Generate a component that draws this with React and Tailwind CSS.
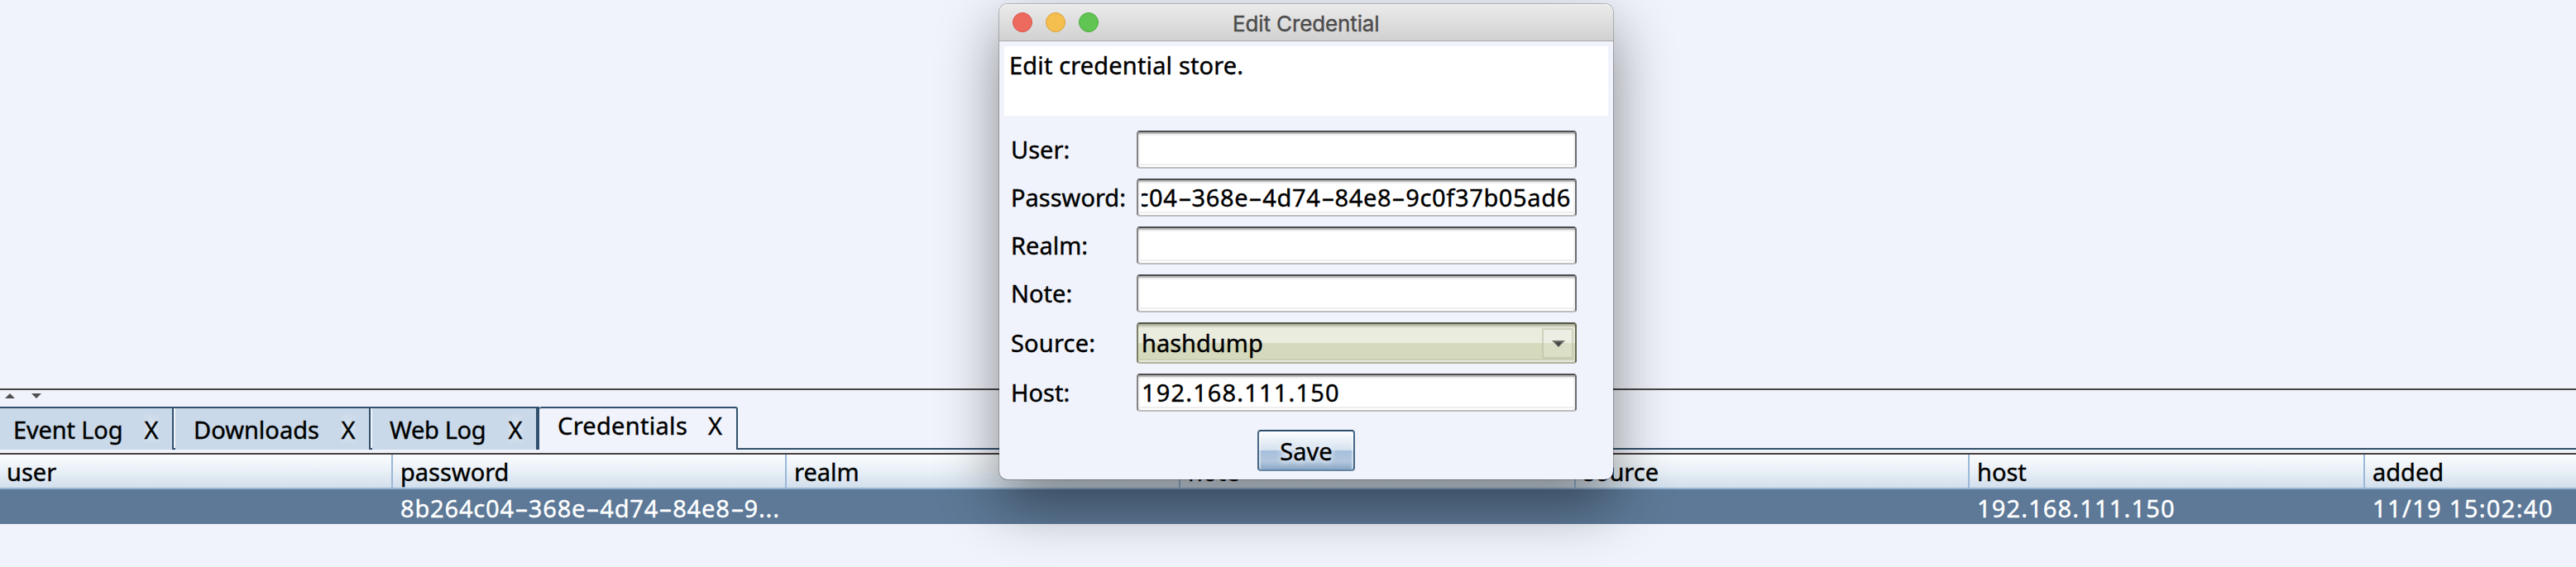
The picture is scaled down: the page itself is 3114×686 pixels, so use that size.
import React from "react";

/* Wide hyphen: the dash takes a full digit cell. */
function Dashed({ text }) {
  const parts = text.split("-");
  return parts.map((part, i) => (
    <React.Fragment key={i}>
      {i > 0 && (
        <span className="inline-block w-[17px] text-center tracking-normal scale-x-[1.75]">-</span>
      )}
      {part}
    </React.Fragment>
  ));
}

function Tab({ label, box, className }) {
  return (
    <div className={`flex h-[50px] justify-between bg-[#c9d9e9] leading-[50px] pt-px ${box}`}>
      <span className={className}>{label}</span>
      <span className="mt-[7px] h-[34px] w-[18px] bg-[radial-gradient(closest-side,#d9e4ef,#cddbea)] text-center leading-[36px]">
        X
      </span>
    </div>
  );
}

const edge =
  "rounded-[4px] border-2 border-t-[#4d4d50] border-r-[#6c6c6e] border-b-[#bdbdbe] border-l-[#848486]";

function Field({ label, children }) {
  return (
    <div className="flex h-[46px] items-start">
      <div className="w-[152px] leading-[46px]">{label}</div>
      <div
        className={`flex h-[46px] w-[532px] bg-white leading-[46px] shadow-[inset_0_2px_0_#b9b9ba,inset_0_4px_0_#efefef,inset_2px_0_0_#f1f1f1,inset_-2px_0_0_#f1f1f1,inset_0_-2px_0_#ffffff,inset_0_-4px_0_#eeeeee] ${edge}`}
      >
        {children}
      </div>
    </div>
  );
}

const columns = [
  { name: "user", value: "", w: "w-[475px] pl-[8px]" },
  { name: "password", value: "8b264c04-368e-4d74-84e8-9...", w: "w-[476px] pl-[9px]" },
  { name: "realm", value: "", w: "w-[476px] pl-[9px]" },
  { name: "note", value: "", w: "w-[478px] pl-[9px]" },
  { name: "source", value: "", w: "w-[476px] pl-[9px]" },
  { name: "host", value: "192.168.111.150", w: "w-[478px] pl-[9px]", num: "tracking-[1.15px]" },
  { name: "added", value: "11/19 15:02:40", w: "w-[255px] pl-[9px]", num: "tracking-[1.35px]" },
];

function Table() {
  return (
    <div>
      <div className="flex h-[42px] border-b-2 border-[#96b5d5] bg-linear-to-b from-[#fbfdff] via-[#e9f0f7] to-[#d2dfec] leading-[42px]">
        {columns.map((c, i) => (
          <div
            key={c.name}
            className={`h-[40px] shrink-0 ${c.w} ${i < 6 ? "border-r-2 border-[#9ab8d7]" : ""}`}
          >
            {c.name}
          </div>
        ))}
      </div>
      <div className="flex h-[42px] bg-[#5d7997] pt-[2px] leading-[42px] text-white">
        {columns.map((c) => (
          <div
            key={c.name}
            className={`h-[40px] shrink-0 whitespace-nowrap ${c.w} ${c.num || "tracking-[0.82px]"}`}
          >
            <Dashed text={c.value} />
          </div>
        ))}
      </div>
    </div>
  );
}

function Dialog() {
  return (
    <div className="absolute top-[5px] left-[1208px] flex h-[575px] w-[742px] flex-col rounded-[10px] bg-[#f0f3fb] shadow-[0_0_0_1px_rgba(0,0,0,0.22),0_28px_72px_rgba(0,0,0,0.45)]">
      <div className="flex h-[45px] shrink-0 items-center rounded-t-[10px] border-b border-[#a9a9a9] bg-linear-to-b from-[#ebebeb] to-[#d1d1d1] pl-[16px] shadow-[inset_0_1px_0_#f6f6f6]">
        <div className="flex w-[266px] gap-[16px]">
          <span className="size-[24px] rounded-full border border-[#d9544a] bg-[#ed6a5e]" />
          <span className="size-[24px] rounded-full border border-[#dba13a] bg-[#f5bf4f]" />
          <span className="size-[24px] rounded-full border border-[#4bab3b] bg-[#61c554]" />
        </div>
        <div className="pt-[3px] font-['Inter'] text-[26px] leading-[40px] tracking-[-0.12px] whitespace-nowrap text-[#4c4c4c]">
          Edit Credential
        </div>
      </div>

      <div className="mx-[6px] mt-[6px] h-[84px] bg-white pt-px pl-[6px] leading-[44px] tracking-[0.15px]">
        Edit credential store.
      </div>

      <div className="mt-[18px] ml-[14px] flex flex-col gap-[12px]">
        <Field label="User:" />
        <Field label="Password:">
          <div className="mx-[4px] flex h-[40px] w-[520px] justify-end overflow-hidden pr-px leading-[42px] tracking-[0.65px] whitespace-nowrap">
            <div>
              <Dashed text="c04-368e-4d74-84e8-9c0f37b05ad6" />
            </div>
          </div>
        </Field>
        <Field label="Realm:" />
        <Field label="Note:" />
        <div className="flex h-[50px] items-start">
          <div className="w-[152px] leading-[50px] tracking-[0.2px]">Source:</div>
          <div className="flex h-[50px] w-[532px] items-center justify-between rounded-[4px] border-2 border-t-[#55564a] border-r-[#65674f] border-b-[#afb29c] border-l-[#7c7e68] bg-[linear-gradient(#eaecde_0_23px,#d5dabd_23px)] pr-[2px] pl-[4px] leading-[46px] shadow-[inset_0_2px_0_#b0b39d,inset_0_4px_0_#d3d6c4,inset_0_-2px_0_#e6e9d9,inset_0_-4px_0_#cbd0b4]">
            <span>hashdump</span>
            <span className="flex h-[37px] w-[38px] items-center justify-center rounded-[2px] border-2 border-[#b9bda2]/60 bg-white/15">
              <svg width="16" height="8" viewBox="0 0 16 8" className="mt-[2px] ml-px">
                <path d="M0 0H16L8 8Z" fill="#6d6f66" />
                <path d="M4 2H12L8 7Z" fill="#444" />
              </svg>
            </span>
          </div>
        </div>
        <Field label="Host:">
          <span className="pl-[4px] leading-[42px] tracking-[1.15px]">192.168.111.150</span>
        </Field>
      </div>

      <div className="mt-[22px] flex justify-center">
        <button className="h-[50px] w-[118px] rounded-[4px] border-2 border-t-[#2c4d6c] border-r-[#456685] border-b-[#6585a5] border-l-[#456685] bg-[linear-gradient(#ffffff,#d3e0ee_23px,#a5bedb_23px,#b3c8de_36px,#8aa6c5)] leading-[48px] shadow-[inset_2px_0_0_rgba(255,255,255,0.45),inset_-2px_0_0_rgba(255,255,255,0.45)]">
          <span className="[text-shadow:0_0_6px_#e6eef7,0_0_6px_#e6eef7,0_0_8px_#e6eef7]">Save</span>
        </button>
      </div>
    </div>
  );
}

export default function App() {
  return (
    <div className="relative h-[686px] w-[3114px] overflow-hidden bg-[#f0f3fb] font-['Noto_Sans','Open_Sans',sans-serif] text-[29px] text-black [-webkit-text-stroke:0.4px_currentColor]">
      <div className="h-[472px] border-b-2 border-[#444444]" />
      <div className="flex h-[20px] items-start gap-[20px] pt-[4px] pl-[6px]">
        <svg width="12" height="6" viewBox="0 0 12 6">
          <path d="M6 0L12 6H0Z" fill="#505050" />
        </svg>
        <svg width="12" height="6" viewBox="0 0 12 6">
          <path d="M0 0H12L6 6Z" fill="#505050" />
        </svg>
      </div>

      <div className="flex h-[52px]">
        <div className="flex h-[52px] gap-[2px] border-y-2 border-[#31506d]">
          <Tab label="Event Log" box="w-[210px] border-r-2 border-[#31506d] pl-[16px] pr-[16px]" className="tracking-[-0.15px]" />
          <Tab label="Downloads" box="w-[236px] border-r-2 border-[#31506d] pl-[22px] pr-[16px]" />
          <Tab label="Web Log" box="w-[202px] border-r-4 border-[#31506d] pl-[21px] pr-[16px]" className="tracking-[-0.35px]" />
        </div>
        <div className="flex h-[52px] w-[240px] justify-between rounded-t-[3px] border-t-2 border-r-2 border-[#31506d] pr-[17px] pl-[22px] leading-[42px]">
          <span className="tracking-[0.3px]">Credentials</span>
          <span>X</span>
        </div>
        <div className="h-[52px] flex-1 border-b-2 border-[#31506d]" />
      </div>
      <div className="h-[6px] border-b-2 border-[#443f40]" />
      <Table />
      <Dialog />
    </div>
  );
}
